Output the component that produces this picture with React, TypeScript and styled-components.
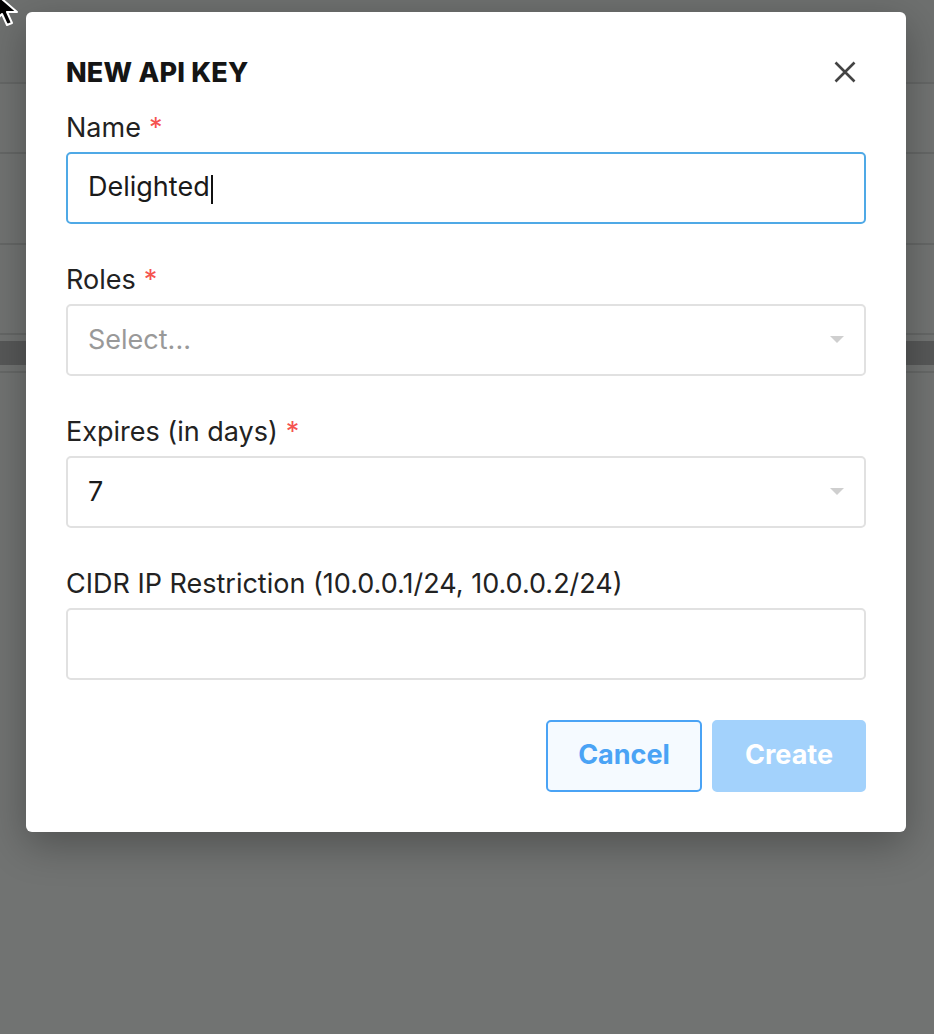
import styled, { createGlobalStyle } from 'styled-components';

const GlobalStyle = createGlobalStyle`
  html, body {
    margin: 0;
    padding: 0;
    height: 100%;
    overflow: hidden;
  }
  body {
    font-family: Inter, "Liberation Sans", sans-serif;
    background: #717372;
  }
`;

const Screen = styled.div`
  position: relative;
  width: 100vw;
  height: 100vh;
  background: #717372;
  overflow: hidden;
`;

// the page behind the dimmed overlay
const PageBehind = styled.div`
  display: flex;
  flex-direction: column;
`;

const PageRow = styled.div<{ h: number; bg?: string; line?: string }>`
  height: ${(p) => p.h}px;
  background: ${(p) => p.bg || '#717372'};
  border-bottom: 2px solid ${(p) => p.line || '#656766'};
  box-sizing: border-box;
`;

const Overlay = styled.div`
  position: absolute;
  inset: 0;
  display: flex;
  justify-content: flex-start;
  align-items: flex-start;
  padding: 12px 0 0 26px;
`;

const Modal = styled.div`
  width: 880px;
  box-sizing: border-box;
  background: #fff;
  border-radius: 6px;
  padding: 40px;
  box-shadow: 0 12px 40px rgba(0, 0, 0, 0.3);
`;

const Header = styled.div`
  display: flex;
  justify-content: space-between;
  align-items: center;
  height: 40px;
  margin-bottom: 20px;
`;

const Title = styled.h2`
  margin: 0;
  font-size: 27px;
  font-weight: 800;
  letter-spacing: 0.2px;
  color: #151515;
`;

const CloseButton = styled.button`
  border: none;
  background: none;
  padding: 0;
  margin-right: 9px;
  width: 24px;
  height: 24px;
  display: flex;
  align-items: center;
  justify-content: center;
  cursor: pointer;
`;

const Field = styled.div`
  display: flex;
  flex-direction: column;
  & + & {
    margin-top: 40px;
  }
`;

const Label = styled.label`
  font-size: 27px;
  line-height: 32px;
  color: #222;
  margin-bottom: 8px;
`;

const Required = styled.span`
  color: #f5534f;
  margin-left: 8px;
`;

const InputBox = styled.div<{ focused?: boolean }>`
  height: 72px;
  box-sizing: border-box;
  border: 2px solid ${(p) => (p.focused ? '#4fa9e6' : '#e1e1e1')};
  border-radius: 5px;
  padding: 0 20px 2px;
  display: flex;
  align-items: center;
  justify-content: space-between;
  font-size: 27px;
  color: #1a1a1a;
`;

const Placeholder = styled.span`
  color: #999;
`;

const Caret = styled.span`
  display: inline-block;
  width: 2px;
  height: 29px;
  background: #111;
  margin-left: 1px;
  vertical-align: middle;
`;

const Arrow = styled.span`
  width: 0;
  height: 0;
  border-left: 7px solid transparent;
  border-right: 7px solid transparent;
  border-top: 7px solid #cfcfcf;
`;

const Actions = styled.div`
  display: flex;
  justify-content: flex-end;
  gap: 10px;
  margin-top: 40px;
`;

const Button = styled.button<{ primary?: boolean }>`
  height: 72px;
  width: ${(p) => (p.primary ? 154 : 156)}px;
  padding: 0 0 3px;
  border-radius: 5px;
  font-family: inherit;
  font-size: 27px;
  font-weight: 700;
  cursor: pointer;
  border: 2px solid ${(p) => (p.primary ? '#a3d2fc' : '#4aa3f5')};
  background: ${(p) => (p.primary ? '#a3d2fc' : '#f5faff')};
  color: ${(p) => (p.primary ? '#fff' : '#4aa3f5')};
`;

const Pointer = styled.svg`
  position: absolute;
  left: -7px;
  top: -9px;
`;

const CloseIcon = () => (
  <svg width="22" height="22" viewBox="0 0 22 22">
    <path d="M1.5 1.5 L20.5 20.5 M20.5 1.5 L1.5 20.5" stroke="#444" strokeWidth="2.6" />
  </svg>
);

export default function App() {
  return (
    <>
      <GlobalStyle />
      <Screen>
        <PageBehind>
          <PageRow h={84} bg="#6e706f" />
          <PageRow h={70} />
          <PageRow h={91} />
          <PageRow h={90} />
          <PageRow h={6} line="transparent" />
          <PageRow h={26} bg="#575858" line="#717372" />
          <PageRow h={6} line="#666867" />
        </PageBehind>

        <Overlay>
          <Modal>
            <Header>
              <Title>NEW API KEY</Title>
              <CloseButton aria-label="Close">
                <CloseIcon />
              </CloseButton>
            </Header>

            <Field>
              <Label>
                Name<Required>*</Required>
              </Label>
              <InputBox focused>
                <span>
                  Delighted
                  <Caret />
                </span>
              </InputBox>
            </Field>

            <Field>
              <Label>
                Roles<Required>*</Required>
              </Label>
              <InputBox>
                <Placeholder>Select...</Placeholder>
                <Arrow />
              </InputBox>
            </Field>

            <Field>
              <Label>
                Expires (in days)<Required>*</Required>
              </Label>
              <InputBox>
                <span>7</span>
                <Arrow />
              </InputBox>
            </Field>

            <Field>
              <Label>CIDR IP Restriction (10.0.0.1/24, 10.0.0.2/24)</Label>
              <InputBox />
            </Field>

            <Actions>
              <Button>Cancel</Button>
              <Button primary>Create</Button>
            </Actions>
          </Modal>
        </Overlay>

        <Pointer width="30" height="40" viewBox="0 0 30 40">
          <path
            d="M2 2 L2 30 L9 23 L14 34 L19 32 L14 21 L24 21 Z"
            fill="#000"
            stroke="#fff"
            strokeWidth="2"
            strokeLinejoin="round"
          />
        </Pointer>
      </Screen>
    </>
  );
}
